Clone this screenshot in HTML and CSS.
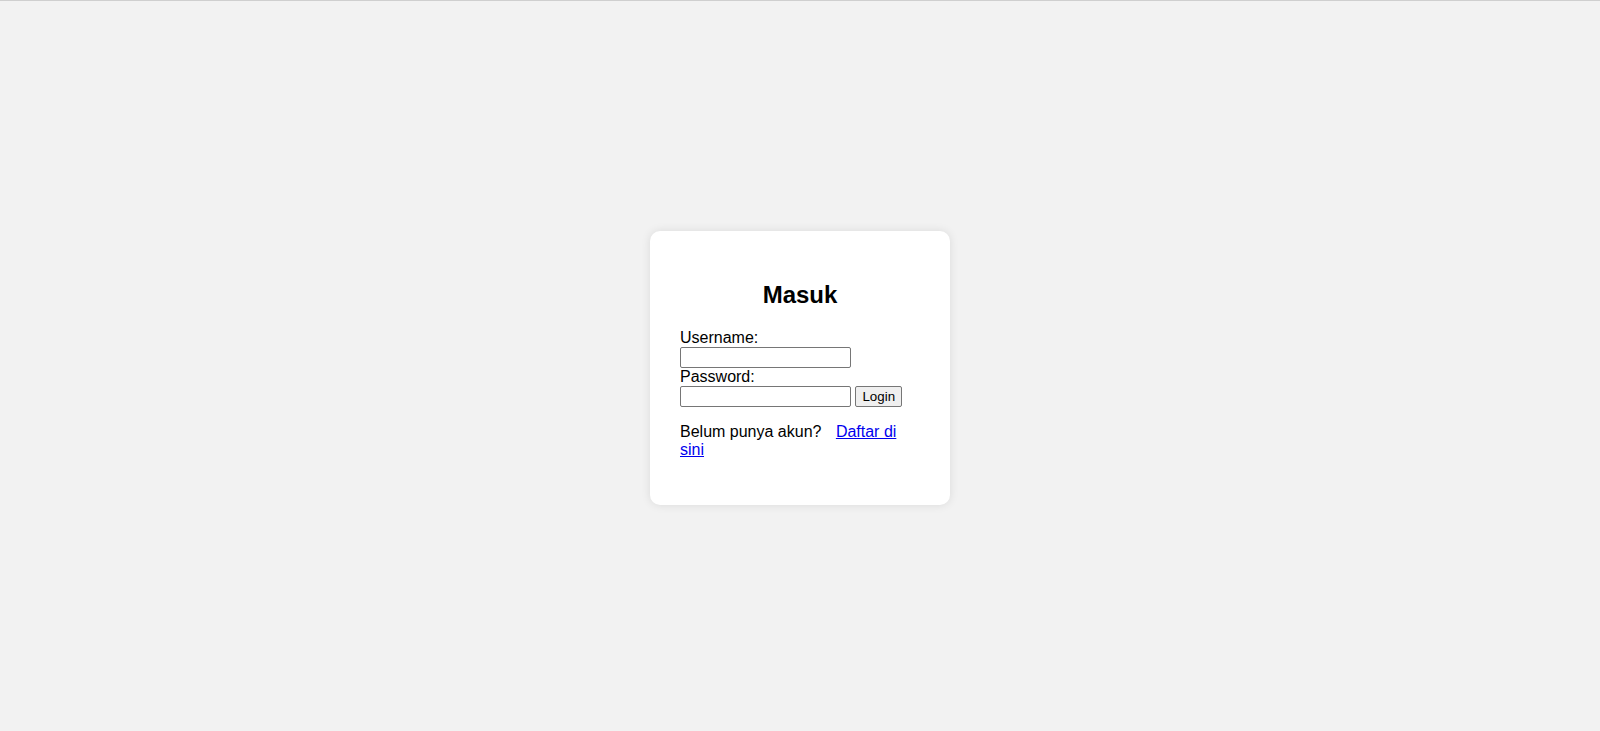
FILE: index.html
```html
<!DOCTYPE html>
<html lang="id">
<head>
<meta charset="utf-8">
<title>Masuk</title>
<link rel="stylesheet" href="styles.css">
</head>
<body>
<div class="card">
  <h2 class="title">Masuk</h2>
  <form class="form">
    <label for="username">Username:</label><br>
    <input type="text" id="username" name="username" class="field"><br>
    <label for="password">Password:</label><br>
    <input type="password" id="password" name="password" class="field">
    <button type="submit" class="btn">Login</button>
  </form>
  <p class="note">Belum punya akun? <a href="#" class="link">Daftar di sini</a></p>
</div>
</body>
</html>
```

FILE: styles.css
```css
html, body {
  margin: 0;
  padding: 0;
}
body {
  min-height: 100vh;
  box-sizing: border-box;
  border-top: 1px solid #cfcfcf;
  padding-top: 4px;
  background: #f2f2f2;
  font-family: "Liberation Sans", Arial, sans-serif;
  font-size: 16px;
  color: #000;
  display: flex;
  align-items: center;
  justify-content: center;
}
.card {
  width: 300px;
  box-sizing: border-box;
  padding: 30px;
  background: #fff;
  border-radius: 10px;
  box-shadow: 0 0 10px rgba(0, 0, 0, 0.1);
}
.title {
  text-align: center;
  font-size: 24px;
  font-weight: bold;
  margin: 20px 0;
}
.form {
  margin: 0;
}
.field {
  width: 171px;
  height: 21px;
  box-sizing: border-box;
  margin: 0;
  padding: 1px 2px;
  border: 1px solid #767676;
  border-radius: 2px;
  font-family: "Liberation Sans", Arial, sans-serif;
  font-size: 13.33px;
  background: #fff;
  vertical-align: baseline;
}
.btn {
  height: 21px;
  box-sizing: border-box;
  margin: 0;
  padding: 1px 6px;
  border: 1px solid #767676;
  border-radius: 2px;
  background: #efefef;
  font-family: "Liberation Sans", Arial, sans-serif;
  font-size: 13.33px;
  color: #000;
}
.note {
  margin: 16px 0;
}
.link {
  color: #0000ee;
  margin-left: 10px;
}
```
